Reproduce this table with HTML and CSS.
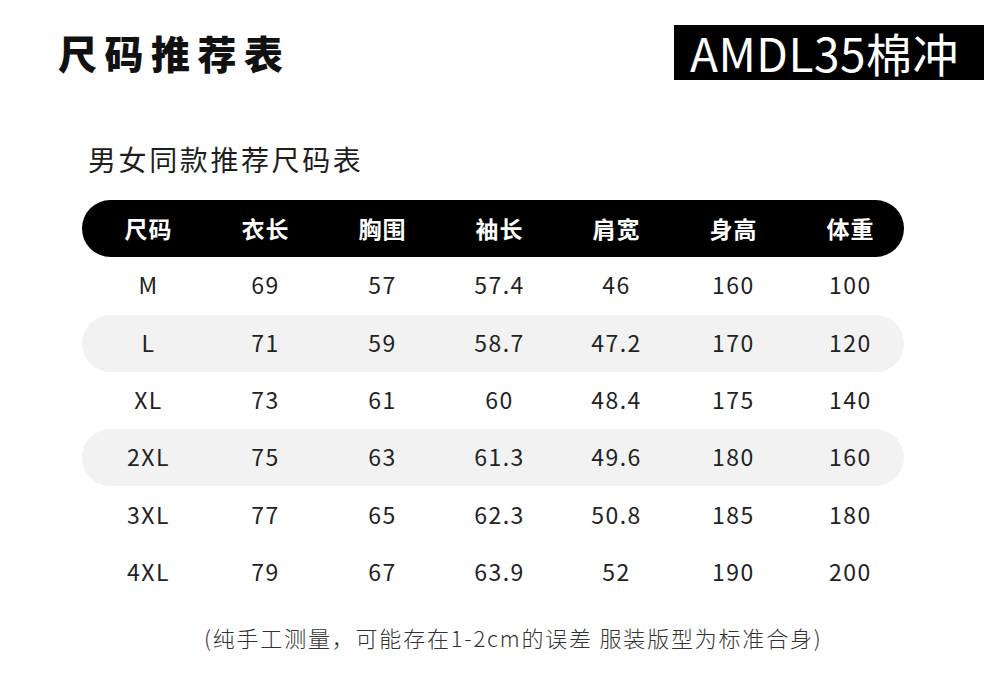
FILE: index.html
```html
<!DOCTYPE html>
<html lang="zh">
<head>
<meta charset="utf-8">
<link rel="stylesheet" href="styles.css">
</head>
<body>
<div class="page">
  <header class="top">
    <h1 class="title">尺码推荐表</h1>
    <div class="badge">AMDL35棉冲</div>
  </header>
  <h2 class="subtitle">男女同款推荐尺码表</h2>
  <div class="table">
    <div class="row head"><span>尺码</span><span>衣长</span><span>胸围</span><span>袖长</span><span>肩宽</span><span>身高</span><span>体重</span></div>
    <div class="row"><span>M</span><span>69</span><span>57</span><span>57.4</span><span>46</span><span>160</span><span>100</span></div>
    <div class="row alt"><span>L</span><span>71</span><span>59</span><span>58.7</span><span>47.2</span><span>170</span><span>120</span></div>
    <div class="row"><span>XL</span><span>73</span><span>61</span><span>60</span><span>48.4</span><span>175</span><span>140</span></div>
    <div class="row alt"><span>2XL</span><span>75</span><span>63</span><span>61.3</span><span>49.6</span><span>180</span><span>160</span></div>
    <div class="row"><span>3XL</span><span>77</span><span>65</span><span>62.3</span><span>50.8</span><span>185</span><span>180</span></div>
    <div class="row"><span>4XL</span><span>79</span><span>67</span><span>63.9</span><span>52</span><span>190</span><span>200</span></div>
  </div>
  <p class="note">(纯手工测量，可能存在1-2cm的误差 服装版型为标准合身)</p>
</div>
</body>
</html>
```

FILE: styles.css
```css
* { box-sizing: border-box; }
html, body { margin: 0; padding: 0; background: #fff; }
body {
  font-family: "Noto Sans CJK SC", "Noto Sans", sans-serif;
  color: #1e1e1e;
  width: 1000px;
  height: 684px;
  overflow: hidden;
}
.page { display: flex; flex-direction: column; }
.top {
  display: flex;
  justify-content: space-between;
  align-items: center;
  padding: 25px 16px 0 58px;
}
.title {
  margin: 0;
  font-size: 39px;
  font-weight: 900;
  letter-spacing: 7.5px;
  line-height: 55px;
  color: #111;
}
.badge {
  background: #000;
  color: #fff;
  height: 55px;
  width: 310px;
  line-height: 55px;
  font-size: 46px;
  font-weight: 400;
  padding-left: 16px;
  letter-spacing: 0.5px;
}
.subtitle {
  margin: 64px 0 0 88px;
  font-size: 28px;
  font-weight: 400;
  line-height: 30px;
  letter-spacing: 2.6px;
  color: #1e1e1e;
}
.table {
  margin: 26px 0 0 82px;
  width: 822px;
  display: flex;
  flex-direction: column;
}
.row {
  display: grid;
  grid-template-columns: repeat(7, 117px);
  height: 57.3px;
  align-items: center;
  padding: 0 0 3px 8px;
  border-radius: 29px;
  font-size: 23px;
  letter-spacing: 1.5px;
  color: #222;
}
.row span { text-align: center; }
.row.head {
  background: #000;
  color: #fff;
  font-weight: 700;
  font-size: 23px;
  letter-spacing: 1px;
  padding-bottom: 2px;
}
.row.alt { background: #f2f2f2; }
.note {
  margin: 21px 0 0 204px;
  font-size: 22px;
  font-weight: 300;
  line-height: 30px;
  letter-spacing: 1.8px;
  color: #333;
}
```
